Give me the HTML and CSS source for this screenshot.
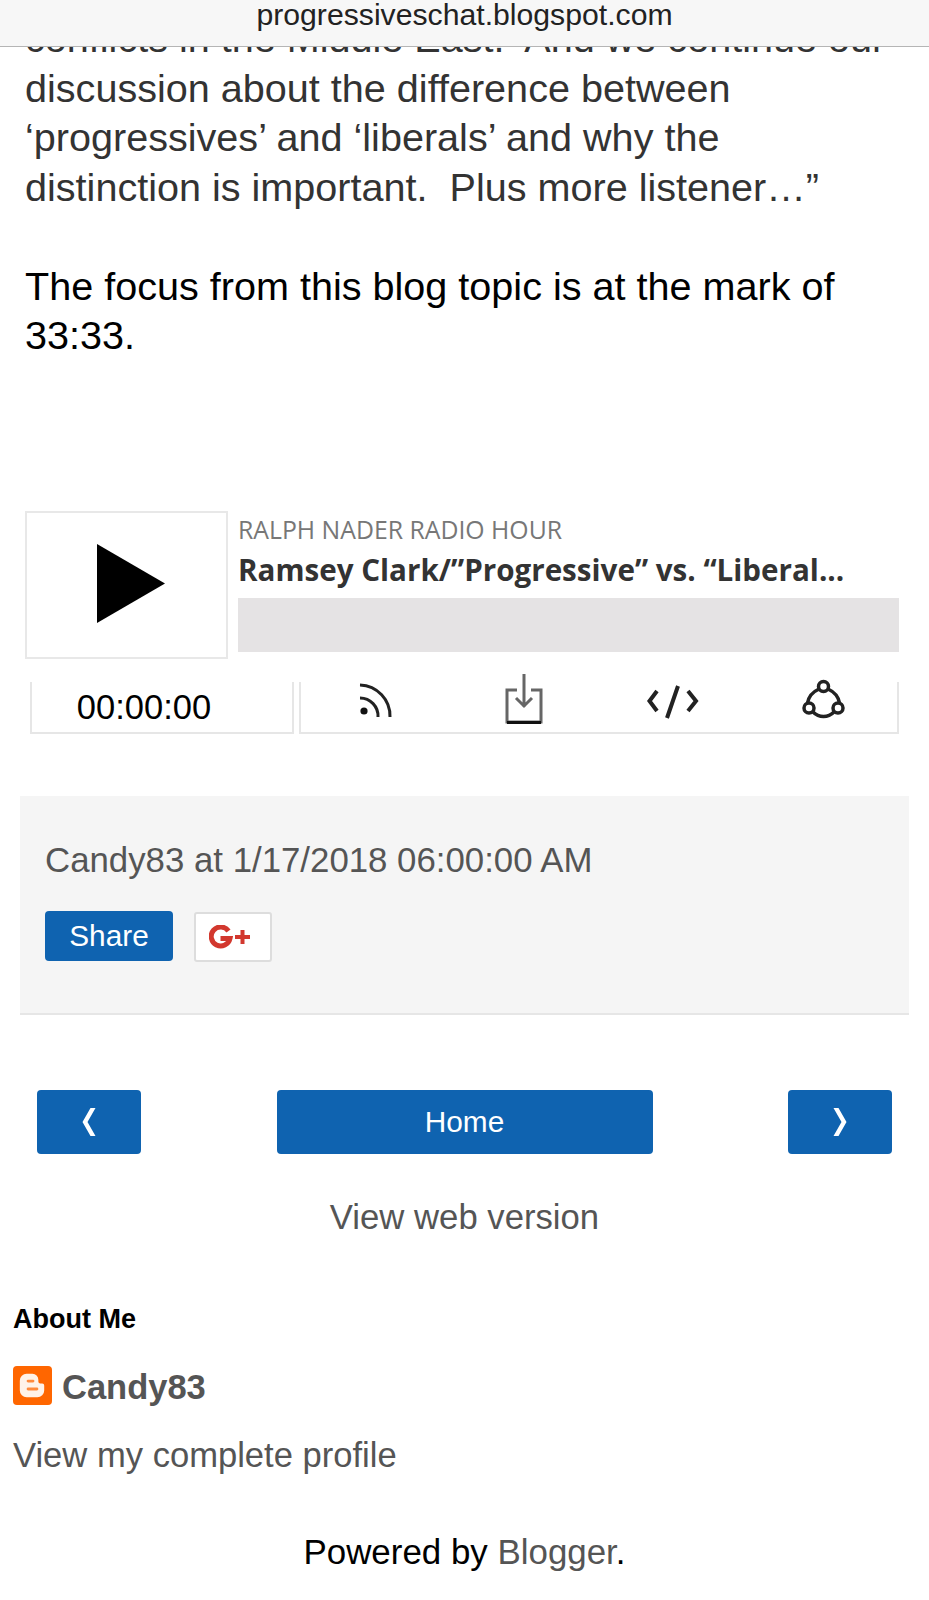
FILE: index.html
```html
<!DOCTYPE html>
<html lang="en">
<head>
    <meta charset="UTF-8">
    <meta name="viewport" content="width=device-width, initial-scale=1.0">
    <title>progressiveschat.blogspot.com</title>
    <link rel="stylesheet" href="styles.css">
</head>
<body>
    <div class="address-bar">progressiveschat.blogspot.com</div>

    <div class="post-body">
        <p class="quote">conflicts in the Middle East.&nbsp; And we continue our<br>discussion about the difference between<br>‘progressives’ and ‘liberals’ and why the<br>distinction is important.&nbsp; Plus more listener…”</p>
        <p class="focus">The focus from this blog topic is at the mark of<br>33:33.</p>
    </div>

    <div class="player">
        <div class="player-top">
            <div class="play-box">
                <svg class="play-icon" viewBox="0 0 68 79"><polygon points="0,0 68,39.5 0,79"/></svg>
            </div>
            <div class="player-info">
                <div class="show-name">RALPH NADER RADIO HOUR</div>
                <div class="episode-name">Ramsey Clark/”Progressive” vs. “Liberal...</div>
                <div class="progress"></div>
            </div>
        </div>
        <div class="player-bottom">
            <div class="time-box">00:00:00</div>
            <div class="tools-box">
                <svg class="tool rss" viewBox="0 0 36 40">
                    <circle cx="5" cy="31" r="3.6" class="fill"/>
                    <path d="M1 18a18 18 0 0 1 18 19"/>
                    <path d="M1 5a31 31 0 0 1 30 32"/>
                </svg>
                <svg class="tool tray" viewBox="0 0 38 50">
                    <path d="M19 0v33M11 24l8 8 8-8" class="grey"/>
                    <path d="M12 16H2v32h34V16H26" class="grey"/>
                    <path d="M2 48.500h34" class="dark"/>
                </svg>
                <svg class="tool code" viewBox="0 0 52 36">
                    <path d="M9 6L1.500 16 9 26M40 6l8 10-8 10M30 1L19 33"/>
                </svg>
                <svg class="tool share" viewBox="0 0 44 44">
                    <circle cx="21.500" cy="8.500" r="5"/>
                    <circle cx="7" cy="30" r="5"/>
                    <circle cx="36" cy="30" r="5"/>
                    <path d="M17 11C10.500 14 6.500 19 5.500 25M26 11C32.500 14 36.500 19 37.500 25M11 34c6 6 15 6 21 0"/>
                </svg>
            </div>
        </div>
    </div>

    <div class="post-footer">
        <div class="byline">Candy83 at 1/17/2018 06:00:00 AM</div>
        <div class="share-row">
            <a class="btn share-btn">Share</a>
            <a class="gplus">
                <svg viewBox="0 0 42 24">
                    <path class="g" d="M19.500 6A9.500 9.500 0 1 0 21 13.500H11.500"/>
                    <path class="plus" d="M33.500 5v14M26 12h15"/>
                </svg>
            </a>
        </div>
    </div>

    <div class="pager">
        <a class="btn pager-side"><svg viewBox="0 0 14 28"><polygon points="8.500,0 13.500,0 5.500,14 13.500,28 8.500,28 0.500,14"/></svg></a>
        <a class="btn pager-home">Home</a>
        <a class="btn pager-side"><svg viewBox="0 0 14 28"><polygon points="5.500,0 0.500,0 8.500,14 0.500,28 5.500,28 13.500,14"/></svg></a>
    </div>
    <div class="web-version">View web version</div>

    <div class="about">
        <h2>About Me</h2>
        <div class="author">
            <svg class="blogger" viewBox="0 0 40 40">
                <rect width="40" height="40" rx="4" fill="#ff6600"/>
                <path d="M14 8h6a6 6 0 0 1 6 6v2a2 2 0 0 0 2 2h2a2 2 0 0 1 2 2v5a7 7 0 0 1-7 7H14a7 7 0 0 1-7-7V15a7 7 0 0 1 7-7z" fill="#fff2e8"/>
                <rect x="14" y="14" width="8" height="3" rx="1.500" fill="#ff8a3c"/>
                <rect x="14" y="22" width="12" height="3" rx="1.500" fill="#ff8a3c"/>
            </svg>
            <span>Candy83</span>
        </div>
        <div class="profile-link">View my complete profile</div>
    </div>

    <div class="powered">Powered by <a>Blogger</a>.</div>
</body>
</html>
```

FILE: styles.css
```css
body {
    margin: 0;
    padding: 0;
    background-color: #fff;
    font-family: "Liberation Sans", Arial, sans-serif;
    color: #000;
    position: relative;
    height: 1600px;
    overflow: hidden;
}
.address-bar {
    position: absolute;
    top: 0;
    left: 0;
    right: 0;
    height: 47px;
    box-sizing: border-box;
    background: #f7f7f7;
    border-bottom: 1px solid #b5b5b5;
    text-align: center;
    font-size: 30.200px;
    line-height: 30px;
    color: #222;
}
.post-body {
    padding: 14px 25px 0;
    font-size: 39.600px;
    line-height: 49.500px;
}
.post-body p {
    margin: 0;
}
.quote {
    color: #333;
}
.post-body .focus {
    margin-top: 49.500px;
}

.player {
    margin: 150px 30px 0 25px;
    font-family: "Open Sans", sans-serif;
}
.player-top {
    display: flex;
    gap: 10px;
}
.play-box {
    width: 203px;
    height: 148px;
    box-sizing: border-box;
    border: 2px solid #e8e8e8;
    padding: 0 0 2px 8px;
    display: flex;
    align-items: center;
    justify-content: center;
}
.play-icon {
    width: 68px;
    height: 79px;
}
.player-info {
    flex: 1;
    min-width: 0;
}
.show-name {
    font-size: 24.800px;
    line-height: 30px;
    margin-top: 3px;
    color: #777;
}
.episode-name {
    font-size: 29.600px;
    font-weight: bold;
    line-height: 38px;
    margin-top: 7px;
    color: #333;
    white-space: nowrap;
}
.progress {
    height: 54px;
    margin-top: 9px;
    background: #e5e3e4;
}
.player-bottom {
    display: flex;
    gap: 5px;
    margin: 23px 0 0 5px;
    height: 52px;
}
.time-box, .tools-box {
    box-sizing: border-box;
    border: 2px solid #e6e6e6;
    border-top: none;
}
.time-box {
    width: 264px;
    font-family: "Liberation Sans", Arial, sans-serif;
    font-size: 34.500px;
    line-height: 50px;
    text-align: center;
    padding-right: 36px;
}
.tools-box {
    flex: 1;
    position: relative;
}
.tool {
    position: absolute;
    fill: none;
    stroke: #222;
    stroke-width: 3;
    overflow: visible;
}
.tool .fill {
    fill: #111;
    stroke: none;
}
.tool .grey {
    stroke: #666;
    stroke-width: 3;
}
.tool .dark {
    stroke: #111;
}
.rss {
    left: 58px;
    top: -2px;
    width: 36px;
    height: 40px;
}
.tray {
    left: 204px;
    top: -8px;
    width: 38px;
    height: 50px;
}
.code {
    left: 347px;
    top: 3px;
    width: 52px;
    height: 36px;
    stroke-width: 4;
}
.share {
    left: 501px;
    top: -4px;
    width: 44px;
    height: 44px;
    stroke-width: 3.500;
}

.post-footer {
    margin: 62px 20px 0;
    padding: 45px 25px 0;
    height: 219px;
    box-sizing: border-box;
    background: #f5f5f5;
    border-bottom: 2px solid #e6e6e6;
}
.byline {
    font-size: 34.800px;
    line-height: 38px;
    color: #555;
}
.share-row {
    display: flex;
    align-items: flex-start;
    gap: 21px;
    margin-top: 32px;
}
.btn {
    display: flex;
    align-items: center;
    justify-content: center;
    box-sizing: border-box;
    background: #0f63b0;
    color: #fff;
    border-radius: 4px;
    font-size: 29.800px;
}
.share-btn {
    width: 128px;
    height: 50px;
}
.gplus {
    width: 78px;
    height: 50px;
    margin-top: 1px;
    box-sizing: border-box;
    background: #fff;
    border: 2px solid #ddd;
    border-radius: 3px;
    padding-right: 7px;
    display: flex;
    align-items: center;
    justify-content: center;
}
.gplus svg {
    width: 42px;
    height: 24px;
    fill: none;
}
.gplus .g, .gplus .plus {
    stroke: #d2382e;
}
.gplus .g {
    stroke-width: 5;
}
.gplus .plus {
    stroke-width: 4;
}

.pager {
    display: flex;
    justify-content: space-between;
    margin: 75px 37px 0;
}
.pager .btn {
    height: 64px;
}
.pager-side {
    width: 104px;
}
.pager-side svg {
    width: 14px;
    height: 28px;
    fill: #fff;
}
.pager-home {
    width: 376px;
}
.web-version {
    margin-top: 43px;
    text-align: center;
    font-size: 34.700px;
    line-height: 40px;
    color: #555;
}

.about {
    padding: 0 13px;
    margin-top: 65px;
}
.about h2 {
    margin: 0;
    font-size: 27px;
    line-height: 34px;
}
.author {
    display: flex;
    align-items: center;
    gap: 10px;
    margin-top: 30px;
    font-size: 34.500px;
    font-weight: bold;
    color: #555;
}
.blogger {
    width: 39px;
    height: 39px;
    margin-bottom: 4px;
}
.profile-link {
    margin-top: 26px;
    font-size: 34.600px;
    line-height: 40px;
    color: #555;
}
.powered {
    margin-top: 57px;
    text-align: center;
    font-size: 34.900px;
    line-height: 40px;
}
.powered a {
    color: #555;
}
```
